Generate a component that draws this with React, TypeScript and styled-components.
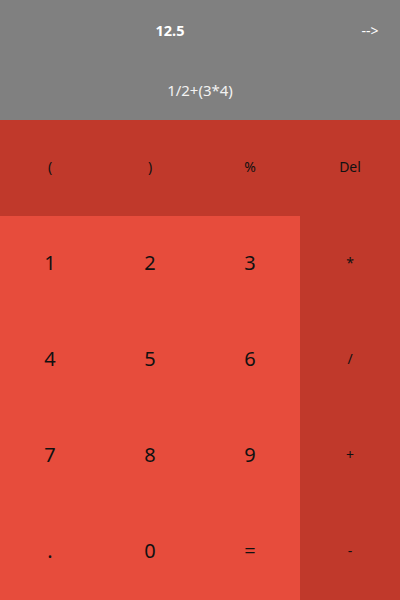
import React from "react";
import styled, { createGlobalStyle } from "styled-components";

const Global = createGlobalStyle`
  html, body { margin: 0; padding: 0; }
  body { font-family: "Noto Sans", "Open Sans", sans-serif; }
`;

const Page = styled.div`
  width: 400px;
  height: 600px;
  display: flex;
  flex-direction: column;
`;

const Display = styled.div`
  background: #808080;
  height: 120px;
  display: grid;
  grid-template-rows: 60px 60px;
  color: #ffffff;
`;

const ResultRow = styled.div`
  display: grid;
  grid-template-columns: 340px 60px;
  align-items: center;
  justify-items: center;
`;

const Result = styled.span`
  font-size: 14.5px;
  font-weight: 700;
`;

const Arrow = styled.span`
  font-size: 14px;
`;

const Expression = styled.div`
  display: flex;
  align-items: center;
  justify-content: center;
  font-size: 15px;
  color: #f2f2f2;
`;

const Pad = styled.div`
  flex: 1;
  display: grid;
  grid-template-columns: repeat(4, 100px);
  grid-template-rows: repeat(5, 96px);
`;

const Key = styled.div<{ $dark?: boolean; $big?: boolean }>`
  background: ${(p) => (p.$dark ? "#c0392b" : "#e74c3c")};
  display: flex;
  align-items: center;
  justify-content: center;
  padding-bottom: 3px;
  box-sizing: border-box;
  color: #111111;
  font-size: ${(p) => (p.$big ? "20px" : "14px")};
`;

const keys: { label: string; dark?: boolean; big?: boolean }[] = [
  { label: "(", dark: true },
  { label: ")", dark: true },
  { label: "%", dark: true },
  { label: "Del", dark: true },
  { label: "1", big: true },
  { label: "2", big: true },
  { label: "3", big: true },
  { label: "*", dark: true },
  { label: "4", big: true },
  { label: "5", big: true },
  { label: "6", big: true },
  { label: "/", dark: true },
  { label: "7", big: true },
  { label: "8", big: true },
  { label: "9", big: true },
  { label: "+", dark: true },
  { label: ".", big: true },
  { label: "0", big: true },
  { label: "=", big: true },
  { label: "-", dark: true },
];

export default function App() {
  return (
    <>
      <Global />
      <Page>
        <Display>
          <ResultRow>
            <Result>12.5</Result>
            <Arrow>--&gt;</Arrow>
          </ResultRow>
          <Expression>1/2+(3*4)</Expression>
        </Display>
        <Pad>
          {keys.map((k, i) => (
            <Key key={i} $dark={k.dark} $big={k.big}>
              {k.label}
            </Key>
          ))}
        </Pad>
      </Page>
    </>
  );
}
